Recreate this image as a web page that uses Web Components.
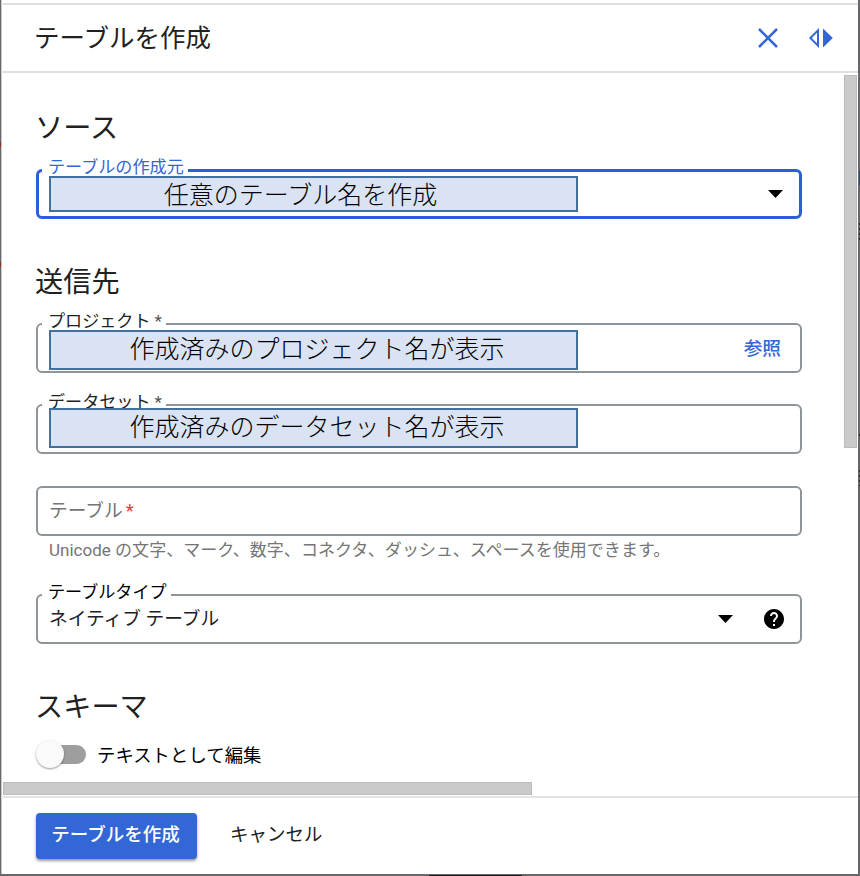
<!DOCTYPE html>
<html lang="ja">
<head>
<meta charset="utf-8">
<title>テーブルを作成</title>
<style>
  html, body { margin: 0; height: 100%; overflow: hidden; }
  body { font-family: Roboto, "Noto Sans CJK JP", sans-serif; color: #212121; background: #fff; }
</style>
</head>
<body>

<create-panel>
  <panel-header slot="header">テーブルを作成</panel-header>

  <form-section heading="ソース">
    <form-field label="テーブルの作成元" focused arrow>
      <name-note slot="note" size="small">任意のテーブル名を作成</name-note>
    </form-field>
  </form-section>

  <form-section heading="送信先">
    <form-field label="プロジェクト" required>
      <name-note slot="note">作成済みのプロジェクト名が表示</name-note>
      <span slot="action">参照</span>
    </form-field>
    <form-field label="データセット" required>
      <name-note slot="note" raised>作成済みのデータセット名が表示</name-note>
    </form-field>
    <form-field placeholder="テーブル" hint="Unicode の文字、マーク、数字、コネクタ、ダッシュ、スペースを使用できます。"></form-field>
    <form-field label="テーブルタイプ" arrow help>ネイティブ テーブル</form-field>
  </form-section>

  <form-section heading="スキーマ">
    <toggle-switch>テキストとして編集</toggle-switch>
  </form-section>

  <panel-button slot="footer" primary>テーブルを作成</panel-button>
  <panel-button slot="footer">キャンセル</panel-button>
</create-panel>

<script>
class BaseElement extends HTMLElement {
  connectedCallback() {
    if (this.shadowRoot) { return; }
    this.attachShadow({mode: 'open'}).innerHTML = this.template();
  }
}

class CreatePanel extends BaseElement {
  template() {
    // The thin frame shows slivers of the page behind the panel
    return `
      <style>
        :host {
          display: block; box-sizing: border-box; width: 860px; height: 876px; padding: 0 2px 2px 1px;
          background:
            linear-gradient(#8c2f22, #8c2f22) 0 142px / 1px 5px no-repeat,
            linear-gradient(#8c2f22, #8c2f22) 0 262px / 1px 5px no-repeat,
            linear-gradient(#2c4a6b, #2c4a6b) 859px 171px / 1px 14px no-repeat,
            repeating-linear-gradient(#222 0 2px, #666 2px 5px) 859px 223px / 1px 18px no-repeat,
            repeating-linear-gradient(#222 0 2px, #666 2px 5px) 859px 470px / 1px 16px no-repeat,
            linear-gradient(#222, #222) 859px 434px / 1px 2px no-repeat,
            linear-gradient(#1c1420, #1c1420) 429px 875px / 93px 1px no-repeat,
            #68686a;
        }
        .panel {
          display: flex; flex-direction: column; box-sizing: border-box; height: 100%;
          padding-top: 3px; background: #fff; box-shadow: inset 1px 0 #c8c8c8;
        }
        header { flex: none; height: 66px; border: solid #e0e0e0; border-width: 2px 0; }
        main { flex: 1; display: flex; min-height: 0; }
        .content { flex: 1; padding: 33px 42px 0 35px; }
        .bar { box-sizing: border-box; background: #cacaca; border: 1px solid #bcbcbc; }
        .vertical { flex: none; width: 13px; height: 373px; margin: 2px 1px 0 0; }
        .horizontal { flex: none; width: 529px; height: 13px; margin: 0 0 1px 2px; }
        footer {
          flex: none; display: flex; align-items: flex-start; gap: 33px;
          box-sizing: border-box; height: 78px; padding: 15px 35px 0;
          border-top: 2px solid #e4e4e4;
        }
      </style>
      <div class="panel">
        <header><slot name="header"></slot></header>
        <main>
          <div class="content"><slot></slot></div>
          <div class="bar vertical"></div>
        </main>
        <div class="bar horizontal"></div>
        <footer><slot name="footer"></slot></footer>
      </div>`;
  }
}

class PanelHeader extends BaseElement {
  template() {
    return `
      <style>
        :host { display: flex; align-items: center; height: 100%; padding: 0 24px 0 33px; font-size: 25.5px; }
        .title { flex: 1; line-height: 36px; }
        svg { display: block; fill: none; stroke: #3367d6; }
        .close { margin-right: 30px; }
      </style>
      <div class="title"><slot></slot></div>
      <svg class="close" width="20" height="20" viewBox="0 0 20 20" stroke-width="2.5"><path d="M1 1l18 18M19 1L1 19"/></svg>
      <svg width="26" height="20" viewBox="0 0 26 20"><path d="M10 2.4v15.2L2.4 10z" stroke-width="2"/><path d="M15 .6v18.8L24.8 10z" fill="#3367d6" stroke="none"/></svg>`;
  }
}

class FormSection extends BaseElement {
  template() {
    return `
      <style>
        :host { display: block; height: 154px; }
        :host(:nth-of-type(2)) { height: 425px; }
        h2 { margin: 0 0 21px -1px; height: 42px; line-height: 45px; font-size: 28.2px; font-weight: 400; }
      </style>
      <h2>${this.getAttribute('heading')}</h2>
      <slot></slot>`;
  }
}

class FormField extends BaseElement {
  template() {
    let has = name => this.hasAttribute(name);
    let label = this.getAttribute('label');
    let placeholder = this.getAttribute('placeholder');
    let hint = this.getAttribute('hint');
    return `
      <style>
        :host { display: block; position: relative; margin-bottom: 31px; font-size: 18.7px; }
        :host([placeholder]) { margin-top: 32px; }
        .box {
          display: flex; align-items: center; box-sizing: border-box; width: 766px; height: 50px;
          padding: 0 14px 0 11px; border: 2px solid #8f9498; border-radius: 6px;
        }
        :host([focused]) .box { border: 3px solid #2a5fd8; padding: 0 13px 0 10px; }
        .label {
          position: absolute; left: 6px; top: -14px; padding: 0 4px 0 6px; background: #fff;
          font-size: 17.1px; line-height: 24px; white-space: nowrap;
        }
        :host([focused]) .label { color: #3367d6; }
        :host([help]) .label { color: #000; }
        .star { margin-left: 4px; color: #555; }
        .value { flex: 1; line-height: 26px; }
        .placeholder { color: #757575; }
        .placeholder b { color: #e53935; font-weight: 400; margin-left: 3px; }
        .hint { height: 27px; padding-left: 13px; font-size: 17.05px; line-height: 29px; color: #757575; white-space: nowrap; }
        svg { display: block; }
        .arrow { margin-right: 3px; }
        :host([help]) .arrow { margin-right: 29px; }
        ::slotted([slot=action]) { color: #3367d6; font-weight: 500; margin: 0 5px 4px 0; }
      </style>
      <div class="box">
        <div class="value">${placeholder ? `<span class="placeholder">${placeholder}<b>*</b></span>` : '<slot></slot>'}</div>
        <slot name="action"></slot>
        ${has('arrow') ? '<svg class="arrow" width="15" height="8" viewBox="0 0 15 8"><path d="M0 0h15L7.5 8z" fill="#000"/></svg>' : ''}
        ${has('help') ? '<svg width="24" height="24" viewBox="0 0 24 24"><path fill="#000" d="M12 2C6.48 2 2 6.48 2 12s4.48 10 10 10 10-4.48 10-10S17.52 2 12 2zm1 17h-2v-2h2v2zm2.07-7.75l-.9.92C13.45 12.9 13 13.5 13 15h-2v-.5c0-1.1.45-2.1 1.17-2.83l1.24-1.26c.37-.36.59-.86.59-1.41 0-1.1-.9-2-2-2s-2 .9-2 2H8c0-2.21 1.79-4 4-4s4 1.79 4 4c0 .88-.36 1.68-.93 2.25z"/></svg>' : ''}
      </div>
      ${label ? `<div class="label">${label}${has('required') ? '<span class="star">*</span>' : ''}</div>` : ''}
      ${hint ? `<div class="hint">${hint}</div>` : ''}
      <slot name="note"></slot>`;
  }
}

// Shaded box laid over a field's value
class NameNote extends BaseElement {
  template() {
    return `
      <style>
        :host {
          position: absolute; left: 13px; top: 7px; box-sizing: border-box; width: 529px; height: 40px;
          border: 2px solid #41719c; background: #dae3f3; color: #000; padding-left: 7px;
          font: 300 25px/31px "Noto Sans CJK JP", sans-serif; text-align: center; white-space: nowrap;
        }
        :host([size=small]) { height: 36px; padding: 0 26px 0 0; }
        :host([raised]) { top: 4px; }
      </style>
      <slot></slot>`;
  }
}

class ToggleSwitch extends BaseElement {
  template() {
    return `
      <style>
        :host { display: flex; align-items: center; gap: 11px; margin-top: -8px; height: 28px; font-size: 18.4px; color: #000; }
        .track { width: 40px; height: 19px; margin-left: 10px; border-radius: 10px; background: #9e9e9e; display: flex; align-items: center; }
        .thumb { flex: none; width: 28px; height: 28px; margin-left: -10px; border-radius: 50%; background: #fafafa; box-shadow: 0 1px 2px rgba(0,0,0,.4); }
      </style>
      <div class="track"><div class="thumb"></div></div>
      <slot></slot>`;
  }
}

class PanelButton extends BaseElement {
  template() {
    return `
      <style>
        :host { display: block; height: 46px; line-height: 45px; font-size: 18.5px; color: #212121; }
        :host([primary]) {
          box-sizing: border-box; width: 161px; padding-right: 2px; text-align: center; color: #fff; font-weight: 500;
          background: #3367d6; border-radius: 4px; box-shadow: 0 2px 3px rgba(0,0,0,.4);
        }
      </style>
      <slot></slot>`;
  }
}

window.customElements.define('create-panel', CreatePanel);
window.customElements.define('panel-header', PanelHeader);
window.customElements.define('form-section', FormSection);
window.customElements.define('form-field', FormField);
window.customElements.define('name-note', NameNote);
window.customElements.define('toggle-switch', ToggleSwitch);
window.customElements.define('panel-button', PanelButton);
</script>
</body>
</html>
